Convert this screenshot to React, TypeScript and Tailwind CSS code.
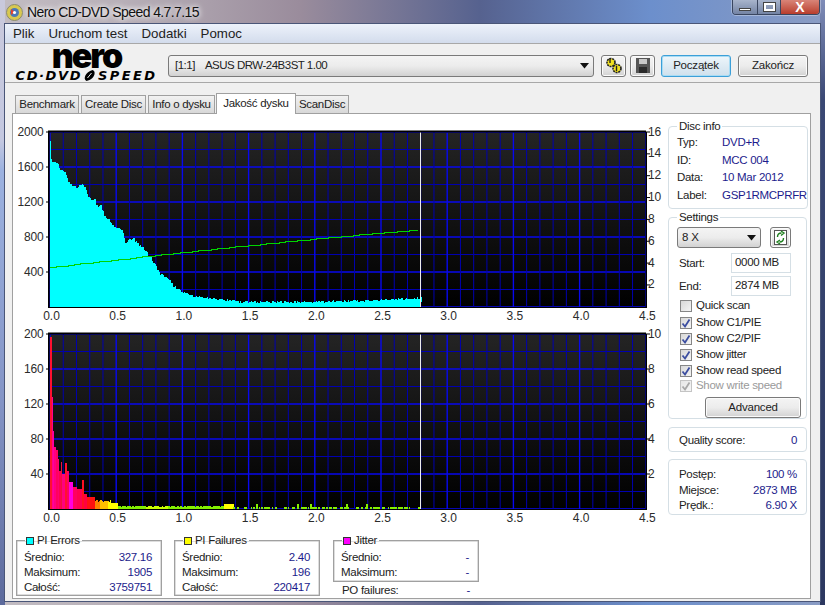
const FONT = { fontFamily: '"Liberation Sans", Arial, sans-serif' };

// small seeded generator so the noisy graphs come out the same every time
function makeRandom(seed: number) {
  let s = seed;
  return () => {
    s = (s * 16807) % 2147483647;
    return s / 2147483647;
  };
}

const xOf = (v: number) => 50 + v * 132.4;

function interp(pts: number[][], x: number) {
  for (let i = 1; i < pts.length; i++) {
    if (x <= pts[i][0]) {
      const [x0, y0] = pts[i - 1];
      const [x1, y1] = pts[i];
      return y0 + ((x - x0) / (x1 - x0)) * (y1 - y0);
    }
  }
  return pts[pts.length - 1][1];
}

const cyanCurve = [
  [50, 160], [52, 162], [57, 163], [60, 172], [65, 172], [68, 182], [73, 187], [75, 188], [82, 185],
  [85, 190], [90, 201], [95, 200], [97, 209], [100, 206], [105, 218], [112, 226], [118, 228],
  [123, 234], [125, 243], [133, 239], [137, 245], [143, 248], [148, 255], [155, 265], [160, 275],
  [167, 279], [173, 287], [182, 293], [190, 297], [207, 299], [227, 301], [240, 303], [300, 303],
  [360, 302], [400, 300], [421, 299],
];

function cyanArea() {
  const rnd = makeRandom(4711);
  let d = "M50 308 L50 142 L51 142";
  for (let x = 51; x < 421; x += 1.33) {
    const top = Math.round(interp(cyanCurve, x) + (rnd() - 0.5) * (x < 180 ? 3 : 2));
    d += ` L${x} ${top} L${x + 1.33} ${top}`;
  }
  return <path d={`${d} L421 308 Z`} fill="#00ffff" shapeRendering="crispEdges" />;
}

const redBars = [
  [50, 51.5, 338, "#ff1030"], [51.5, 52.5, 398, "#ff0090"], [52.5, 54, 432, "#ff00a0"], [54, 56, 448, "#ff0080"],
  [56, 57.5, 451, "#ff0060"], [57.5, 59, 460, "#ff0070"], [59, 61, 472, "#ff0050"], [61, 62, 463, "#f01040"],
  [62, 65, 475, "#ff0080"], [65, 67, 464, "#ff1030"], [67, 68.5, 472, "#ff0060"], [68.5, 73, 483, "#ff00e0"],
  [73, 77, 488, "#ff0060"], [77, 82, 490, "#ff0050"], [82, 83.5, 481, "#ff1020"], [83.5, 87, 495, "#ff0040"],
  [87, 95, 498, "#ff1010"],
] as const;

function lowBarColor(x: number) {
  if (x < 100) return "#ff8000";
  if (x < 108) return "#ffc000";
  if (x < 117) return "#ffff00";
  if (x > 223 && x < 233) return "#ffff00";
  if (x > 145 && x < 168) return "#c8ff00";
  return "#84f000";
}

function pifBars() {
  const rnd = makeRandom(977);
  const out = redBars.map(([a, b, top, color]) => (
    <rect key={a} x={a} y={top} width={b - a + 0.4} height={509.5 - top} fill={color} shapeRendering="crispEdges" />
  ));
  for (let x = 95; x < 420; x += 1.33) {
    let top = 506.5 + rnd() * 1.5;
    if (x < 110) top = 501 + rnd() * 2;
    else if (x < 117) top = 504;
    else if (x > 223 && x < 233) top = 505;
    else if (x >= 233) {
      const r = rnd();
      if (r < 0.55) continue;
      top = r > 0.95 ? 505 : 507.5;
    }
    out.push(<rect key={x} x={x} y={top} width={1.6} height={509.5 - top} fill={lowBarColor(x)} shapeRendering="crispEdges" />);
  }
  return out;
}

function speedLine() {
  let d = "M50 268";
  let y = 268;
  for (let x = 56; x <= 418; x += 6.2) {
    const t = (x - 50) / 368;
    const next = Math.round(268 - 37 * (1 - Math.pow(1 - t, 1.15)));
    d += ` L${x} ${y}`;
    if (next !== y) {
      y = next;
      d += ` L${x} ${y}`;
    }
  }
  return <path d={`${d} L418 231`} fill="none" stroke="#00d400" strokeWidth={1} shapeRendering="crispEdges" />;
}

interface ChartProps {
  id: string;
  top: number;
  left: string[];
  right: string[];
  rightStep: number;
  children: React.ReactNode;
}

function Chart({ id, top, left, right, rightStep, children }: ChartProps) {
  const bottom = top + 175;
  const ticksX = Array.from({ length: 46 }, (_, i) => i);
  const rowsY = Array.from({ length: 11 }, (_, i) => i);
  return (
    <svg width={655} height={201} viewBox={`13 ${top - 9} 655 201`} className="block shrink-0" style={FONT}>
      <defs>
        <linearGradient id={id} x1="0" y1="0" x2="0" y2="1">
          <stop offset="0" stopColor="#242424" />
          <stop offset="1" stopColor="#000000" />
        </linearGradient>
      </defs>
      <rect x={49} y={top} width={597} height={175} fill={`url(#${id})`} />
      {rowsY.map((i) => (
        <line key={i} x1={49} x2={646} y1={top + i * 17.5} y2={top + i * 17.5}
          stroke={i % 2 === 0 ? "#0808ee" : "#0000b0"} strokeWidth={i % 2 === 0 ? 1.4 : 1} />
      ))}
      {ticksX.map((i) => (
        <line key={i} x1={xOf(i / 10)} x2={xOf(i / 10)} y1={top} y2={bottom}
          stroke={i % 5 === 0 ? "#0808ee" : "#0000b0"} strokeWidth={i % 5 === 0 ? 1.4 : 1} />
      ))}
      {children}
      <rect x={420} y={top} width={1} height={175} fill="#ececec" shapeRendering="crispEdges" />
      <rect x={48} y={top - 1.5} width={598} height={2} fill="#000" />
      <rect x={48} y={top} width={1.5} height={176} fill="#000" />
      <rect x={645.5} y={top} width={1.5} height={176} fill="#000" />
      <rect x={48} y={bottom} width={598} height={1} fill="#000" />
      {left.map((t, i) => (
        <g key={t}>
          <line x1={46} x2={49} y1={top + i * 35} y2={top + i * 35} stroke="#000" />
          <text x={43.5} y={top + i * 35 + 3.5} textAnchor="end" fontSize={12} letterSpacing={-0.2} fill="#2b2b2b">{t}</text>
        </g>
      ))}
      {right.map((t, i) => (
        <g key={t}>
          <line x1={646} x2={650} y1={top + i * rightStep} y2={top + i * rightStep} stroke="#000" />
          <text x={648} y={top + i * rightStep + 3.5} fontSize={12} letterSpacing={-0.2} fill="#2b2b2b">{t}</text>
        </g>
      ))}
      {["0.0", "0.5", "1.0", "1.5", "2.0", "2.5", "3.0", "3.5", "4.0", "4.5"].map((t, i) => (
        <text key={t} x={xOf(i / 2) + 1.5} y={bottom + 12.5} textAnchor="middle" fontSize={12} fill="#2b2b2b">{t}</text>
      ))}
    </svg>
  );
}

function StatBox({ title, color, rows, h }: { title: string; color: string; rows: string[][]; h: string }) {
  return (
    <fieldset className={`w-[146px] ${h} border border-[#a0a0a0] px-[7px] shadow-[inset_0_0_0_0.5px_#bbb]`}>
      <legend className="ml-[1px] flex h-[15px] items-center gap-[3px] pr-[2px] pl-[1px] text-[11.5px] tracking-[-0.3px] text-[#222]">
        <span className={`h-[8px] w-[8px] border border-[#333] ${color}`} />
        {title}
      </legend>
      <div className="mt-[2px]">
        {rows.map(([k, v]) => (
          <div key={k} className="flex h-[15px] items-center justify-between pr-[2px] text-[11.5px] tracking-[-0.3px] text-[#222]">
            <span>{k}</span>
            <span className="text-[#1c1c8c]">{v}</span>
          </div>
        ))}
      </div>
    </fieldset>
  );
}

function Check({ label, on = true, off = false, className = "" }: { label: string; on?: boolean; off?: boolean; className?: string }) {
  return (
    <div className={`flex h-[16px] items-center gap-[4px] text-[11.5px] tracking-[-0.3px] ${off ? "text-[#9a9a9a]" : "text-[#222]"} ${className}`}>
      <span className={`flex h-[12px] w-[12px] items-center justify-center border bg-gradient-to-br ${off ? "border-[#c4c4c4] from-[#e6e6e6] to-[#f6f6f6]" : "border-[#868686] from-[#d8d8d8] to-[#f4f4f4]"}`}>
        {on && (
          <svg width="10" height="10" viewBox="0 0 10 10">
            <path d="M1.5 5.5 L4 8.5 L8.5 1.5" fill="none" stroke={off ? "#a8a8a8" : "#3c4ea0"} strokeWidth="1.8" />
          </svg>
        )}
      </span>
      <span>{label}</span>
    </div>
  );
}

function GroupRow({ k, v }: { k: string; v: string }) {
  return (
    <div className="flex h-[17.5px] items-center text-[11.5px] tracking-[-0.3px] text-[#222]">
      <span className="w-[45px]">{k}</span>
      <span className="text-[#1c1c8c]">{v}</span>
    </div>
  );
}

function Arrow() {
  return (
    <svg width="9" height="6" viewBox="0 0 9 6">
      <path d="M0 0 H9 L4.5 5.5 Z" fill="#111" />
    </svg>
  );
}

const btn = "flex items-center justify-center rounded-[3px] border border-[#7a7a7a] bg-gradient-to-b from-[#f4f4f4] via-[#ececec] to-[#d2d2d2] text-[11.5px] tracking-[-0.2px] text-[#222] shadow-[inset_0_0_0_1px_#fbfbfb]";
const tab = "flex h-[18px] items-center justify-center border border-b-0 border-[#a0a0a0] bg-gradient-to-b from-[#f2f2f2] to-[#d8d8d8] pt-[1px]";

export default function App() {
  return (
    <div className="flex h-[605px] w-[825px] flex-col overflow-hidden [background:linear-gradient(180deg,#c9c9dc_0px,#c4c8e0_140px,#9cb2e0_170px,#8494c6_400px,#5c6a9c_605px)_left/5px_100%_no-repeat,linear-gradient(180deg,#7f8cb8_0px,#3a4874_100px,#2c3860_605px)_right/5px_100%_no-repeat,linear-gradient(90deg,#c2bcc2_0px,#b8b0b8_120px,#9a8c9c_300px,#56628f_480px,#6c8fcc_650px,#8a9cc4_825px)]" style={FONT}>
      {/* title bar */}
      <div className="flex h-[24px] shrink-0 items-start">
        <svg width="17" height="17" viewBox="0 0 17 17" className="mt-[4px] ml-[6px]">
          <circle cx="8.5" cy="8.5" r="8" fill="#d8c850" stroke="#8a8a70" />
          <circle cx="8.5" cy="8.5" r="4.5" fill="#4a78b8" />
          <path d="M5 5 L9 8 L5 11Z" fill="#e04030" />
          <circle cx="8.5" cy="8.5" r="1.6" fill="#fff" />
        </svg>
        <span className="mt-[3px] ml-[4px] text-[14px] leading-[18px] tracking-[-0.6px] text-[#111] [text-shadow:0_0_7px_#fff,0_0_5px_#fff]">Nero CD-DVD Speed 4.7.7.15</span>
        <div className="ml-auto mr-[5px] flex h-[15px] w-[88px] overflow-hidden rounded-b-[4px] border border-t-0 border-[#3a4660] shadow-[0_0_0_1px_#ffffff50]">
          <div className="flex w-[25px] items-end justify-center border-r border-[#3a4660] bg-gradient-to-b from-[#a8b4cc] to-[#7484a4] pb-[3px]">
            <div className="h-[3px] w-[12px] border border-[#444] bg-white" />
          </div>
          <div className="flex w-[23px] items-center justify-center border-r border-[#3a4660] bg-gradient-to-b from-[#a8b4cc] to-[#7484a4]">
            <div className="h-[8px] w-[11px] border-2 border-white outline outline-[#444]" />
          </div>
          <div className="flex flex-1 items-center justify-center bg-gradient-to-b from-[#d88478] to-[#b83c2c] text-[14px] leading-none font-bold text-white">X</div>
        </div>
      </div>

      {/* client area */}
      <div className="ml-[5px] flex h-[577px] w-[815px] shrink-0 flex-col bg-[#f0f0f0] shadow-[0_0_0_1px_#4a5678]">
        <div className="flex h-[19px] shrink-0 items-center gap-[14px] bg-gradient-to-b from-[#edf2fb] to-[#d3dcec] pl-[8px] text-[13.3px] text-[#222]">
          <span>Plik</span>
          <span>Uruchom test</span>
          <span>Dodatki</span>
          <span>Pomoc</span>
        </div>
        <div className="flex h-[40px] shrink-0 items-center border-y border-y-[#a8a8a8] pt-[5px] pr-[11px]">
          <div className="mt-[-5px] flex w-[163px] shrink-0 flex-col items-center text-black">
            <div className="h-[22px] font-['Inter'] text-[34px] leading-[22px] font-black tracking-[-2px]">nero</div>
            <div className="mt-[3px] flex h-[11px] items-center font-['DejaVu_Sans'] text-[13px] leading-[11px] font-bold italic tracking-[1.6px]">
              <span>CD·DVD</span>
              <svg width="15" height="11" viewBox="0 0 14 11" className="mr-[1px]">
                <path d="M4 11 C0 9 3 2 10 0 C14 1 12 8 7 10 Z" fill="#000" />
                <path d="M5 8 L9 3" stroke="#f0f0f0" strokeWidth="1" />
              </svg>
              <span className="tracking-[2.4px]">SPEED</span>
            </div>
          </div>
          <div className="flex h-[22px] w-[426px] shrink-0 items-center rounded-[3px] border border-[#7a7a7a] bg-gradient-to-b from-[#f4f4f4] via-[#ececec] to-[#d2d2d2] pr-[4px] pl-[6px] text-[11.5px] tracking-[-0.5px] text-[#222]">
            <span>[1:1]</span>
            <span className="ml-[10px]">ASUS DRW-24B3ST 1.00</span>
            <span className="ml-auto">
              <Arrow />
            </span>
          </div>
          <div className={`${btn} ml-[7px] h-[22px] w-[25px]`}>
            <svg width="18" height="17" viewBox="0 0 18 17">
              <g fill="#f0e020" stroke="#222" strokeWidth="1">
                <circle cx="6" cy="5.5" r="4" strokeDasharray="2 0.8" strokeWidth="1.6" />
                <circle cx="12" cy="11.5" r="4" strokeDasharray="2 0.8" strokeWidth="1.6" />
              </g>
              <path d="M5 1 V6 M11.5 9 V14" stroke="#222" strokeWidth="1.4" />
            </svg>
          </div>
          <div className={`${btn} ml-[4px] h-[22px] w-[25px]`}>
            <svg width="14" height="15" viewBox="0 0 14 15">
              <path d="M0 0 H14 V15 H0 Z" fill="#555" />
              <rect x="3" y="1" width="8" height="5" fill="#c8c8c8" />
              <rect x="3" y="9" width="8" height="6" fill="#2a2a2a" />
            </svg>
          </div>
          <div className="ml-[6px] flex h-[22px] w-[70px] items-center justify-center rounded-[3px] border border-[#3c9fd8] bg-gradient-to-b from-[#eef6fb] to-[#cfe0ec] text-[11.5px] tracking-[-0.2px] text-[#222] shadow-[inset_0_0_0_1px_#a8dcf4]">Początek</div>
          <div className={`${btn} ml-[7px] h-[22px] w-[70px]`}>Zakończ</div>
        </div>

        {/* tabs */}
        <div className="relative z-10 flex h-[30px] shrink-0 items-end pl-[10px] text-[11.5px] tracking-[-0.3px] text-[#222]">
          <div className={`${tab} mr-[2px] w-[64px]`}>Benchmark</div>
          <div className={`${tab} mr-[2px] w-[65px]`}>Create Disc</div>
          <div className={`${tab} mr-[1px] w-[67px]`}>Info o dysku</div>
          <div className="-mb-[1px] flex h-[21px] w-[80px] items-start justify-center border border-b-0 border-[#a0a0a0] bg-white pt-[3px] leading-[13px]">Jakość dysku</div>
          <div className={`${tab} w-[53px] border-l-0`}>ScanDisc</div>
        </div>

        {/* tab page */}
        <div className="ml-[7px] flex h-[486px] w-[799px] shrink-0 border border-[#a0a0a0] bg-white">
          <div className="flex w-[655px] shrink-0 flex-col pt-[9px]">
            <Chart id="g1" top={133} left={["2000", "1600", "1200", "800", "400"]} rightStep={21.85}
              right={["16", "14", "12", "10", "8", "6", "4", "2"]}>
              {cyanArea()}
              {speedLine()}
            </Chart>
            <div className="mt-[1px] shrink-0">
              <Chart id="g2" top={335} left={["200", "160", "120", "80", "40"]} rightStep={35}
                right={["10", "8", "6", "4", "2"]}>
                {pifBars()}
              </Chart>
            </div>
            <div className="mt-[7px] flex shrink-0 pl-[3px]">
              <StatBox title="PI Errors" color="bg-[#00ffff]" h="h-[63px]"
                rows={[["Średnio:", "327.16"], ["Maksimum:", "1905"], ["Całość:", "3759751"]]} />
              <div className="ml-[12px]">
                <StatBox title="PI Failures" color="bg-[#ffff00]" h="h-[63px]"
                  rows={[["Średnio:", "2.40"], ["Maksimum:", "196"], ["Całość:", "220417"]]} />
              </div>
              <div className="ml-[13px] w-[146px]">
                <StatBox title="Jitter" color="bg-[#ff00ff]" h="h-[49px]"
                  rows={[["Średnio:", "-"], ["Maksimum:", "-"]]} />
                <div className="flex h-[15px] items-center justify-between px-[9px] pt-[3px] text-[11.5px] tracking-[-0.3px] text-[#222]">
                  <span>PO failures:</span>
                  <span className="text-[#1c1c8c]">-</span>
                </div>
              </div>
            </div>
          </div>

          {/* right side */}
          <div className="flex w-[139px] shrink-0 flex-col pt-[5px]">
            <fieldset className="h-[90px] rounded-[4px] border border-[#d5dfe5] pl-[8px]">
              <legend className="px-[2px] text-[11.5px] leading-[14px] tracking-[-0.3px] text-[#222]">Disc info</legend>
              <div className="mt-[1px]">
                <GroupRow k="Typ:" v="DVD+R" />
                <GroupRow k="ID:" v="MCC 004" />
                <GroupRow k="Data:" v="10 Mar 2012" />
                <GroupRow k="Label:" v="GSP1RMCPRFR" />
              </div>
            </fieldset>
            <fieldset className="mt-[1px] h-[209px] rounded-[4px] border border-[#d5dfe5] pl-[8px]">
              <legend className="px-[2px] text-[11.5px] leading-[14px] tracking-[-0.3px] text-[#222]">Settings</legend>
              <div className="mt-[3px] flex items-center">
                <div className="flex h-[21px] w-[84px] items-center justify-between rounded-[3px] border border-[#7a7a7a] bg-gradient-to-b from-[#f4f4f4] via-[#ececec] to-[#d2d2d2] pr-[4px] pl-[4px] text-[11.5px] tracking-[-0.2px] text-[#222]">
                  <span>8 X</span>
                  <Arrow />
                </div>
                <div className={`${btn} ml-[9px] h-[21px] w-[21px]`}>
                  <svg width="13" height="15" viewBox="0 0 13 15">
                    <rect x="0.5" y="0.5" width="12" height="14" fill="#fff" stroke="#555" />
                    <path d="M3.5 7 C3.5 4 5 3 7.5 3 M7 1 L10 3 L7 5.5" fill="none" stroke="#208020" strokeWidth="1.4" />
                    <path d="M9.5 8 C9.5 11 8 12 5.5 12 M6 10 L3 12 L6 14" fill="none" stroke="#208020" strokeWidth="1.4" />
                  </svg>
                </div>
              </div>
              <div className="mt-[4px] flex h-[21px] items-center pl-[2px] text-[11.5px] tracking-[-0.3px] text-[#222]">
                <span className="mt-[3px] w-[52px]">Start:</span>
                <div className="flex h-[20px] w-[60px] items-center border border-[#d5dfe5] pl-[3px]">0000 MB</div>
              </div>
              <div className="mt-[2px] flex h-[21px] items-center pl-[2px] text-[11.5px] tracking-[-0.3px] text-[#222]">
                <span className="mt-[3px] w-[52px]">End:</span>
                <div className="flex h-[20px] w-[60px] items-center border border-[#d5dfe5] pl-[3px]">2874 MB</div>
              </div>
              <div className="mt-[2px] pl-[3px]">
                <Check label="Quick scan" on={false} />
                <Check label="Show C1/PIE" className="mt-[1px]" />
                <Check label="Show C2/PIF" />
                <Check label="Show jitter" />
                <Check label="Show read speed" />
                <Check label="Show write speed" off className="-mt-[1px]" />
              </div>
              <div className={`${btn} mt-[3px] ml-[28px] h-[21px] w-[96px]`}>Advanced</div>
            </fieldset>
            <div className="mt-[8px] flex h-[25px] items-center justify-between rounded-[4px] border border-[#d5dfe5] pt-[3px] pr-[9px] pl-[10px] text-[11.5px] tracking-[-0.3px] text-[#222]">
              <span>Quality score:</span>
              <span className="text-[#1c1c8c]">0</span>
            </div>
            <div className="mt-[7px] flex h-[56px] flex-col justify-center rounded-[4px] border border-[#d5dfe5] pt-[7px] pr-[9px] pl-[10px] text-[11.5px] tracking-[-0.3px] text-[#222]">
              {[["Postęp:", "100 %"], ["Miejsce:", "2873 MB"], ["Prędk.:", "6.90 X"]].map(([k, v]) => (
                <div key={k} className="flex h-[15.5px] items-center justify-between">
                  <span>{k}</span>
                  <span className="text-[#1c1c8c]">{v}</span>
                </div>
              ))}
            </div>
          </div>
        </div>
      </div>
    </div>
  );
}
